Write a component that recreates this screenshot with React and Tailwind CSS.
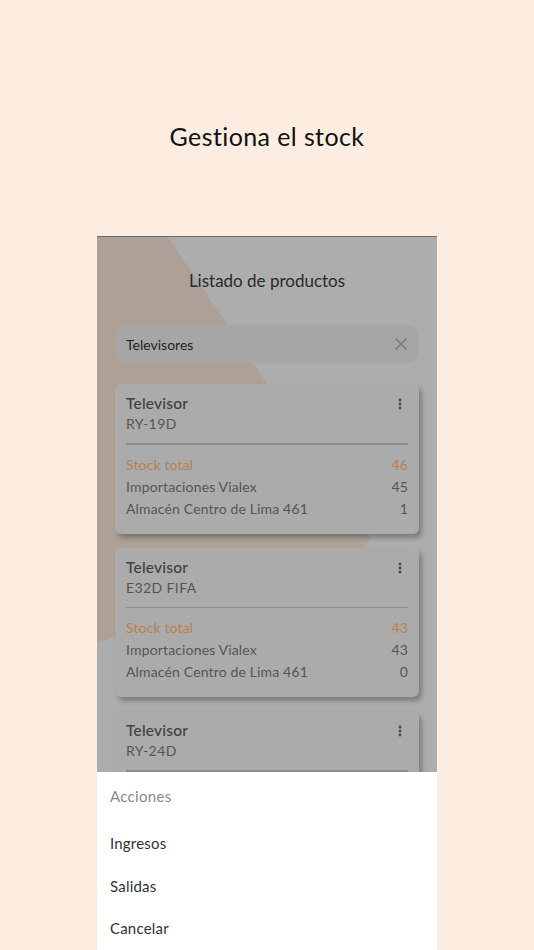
import React from 'react';

const products = [
  { name: 'Televisor', model: 'RY-19D', total: 46, stores: [['Importaciones Vialex', 45], ['Almacén Centro de Lima 461', 1]] },
  { name: 'Televisor', model: 'E32D FIFA', total: 43, stores: [['Importaciones Vialex', 43], ['Almacén Centro de Lima 461', 0]] },
  { name: 'Televisor', model: 'RY-24D', total: 12, stores: [['Importaciones Vialex', 12], ['Almacén Centro de Lima 461', 0]] },
];

const Dots = () => (
  <svg width="4" height="12" viewBox="0 0 4 12" className="mt-[2px]">
    <circle cx="2" cy="2" r="1.4" fill="#4a4a4a" />
    <circle cx="2" cy="6" r="1.4" fill="#4a4a4a" />
    <circle cx="2" cy="10" r="1.4" fill="#4a4a4a" />
  </svg>
);

const ProductCard = ({ product }) => (
  <div className="bg-[#ababab] rounded-md px-[11px] pt-2 pb-[14px] shadow-[3px_4px_5px_rgba(0,0,0,0.28)]">
    <div className="flex justify-between items-start">
      <div>
        <p className="text-[15.5px] leading-[22px] font-medium text-[#404040] tracking-[0.2px]">{product.name}</p>
        <p className="text-[14px] leading-5 text-[#555] tracking-[0.4px]">{product.model}</p>
      </div>
      <div className="pt-[4px] pr-[6px]">
        <Dots />
      </div>
    </div>
    <div className="h-[1.5px] bg-[#8c8c8c] mt-[9px] mb-[9px]" />
    <div className="text-[14px] leading-[22px] tracking-[0.15px]">
      <div className="flex justify-between text-[#b9804f]">
        <span>Stock total</span>
        <span>{product.total}</span>
      </div>
      {product.stores.map(([store, qty]) => (
        <div key={store} className="flex justify-between text-[#555]">
          <span>{store}</span>
          <span>{qty}</span>
        </div>
      ))}
    </div>
  </div>
);

export default function App() {
  return (
    <div className="min-h-[950px] bg-[#fdede0] flex flex-col items-center" style={{ fontFamily: 'Lato, "Noto Sans", sans-serif' }}>
      <h1 className="mt-[120px] text-[25px] leading-8 text-[#111] tracking-[0.4px]">Gestiona el stock</h1>

      {/* Phone screen */}
      <div className="mt-[84px] w-[340px] h-[714px] relative overflow-hidden bg-[#adadad] border-t border-[#6b6b6b]">
        <svg className="absolute inset-0" width="340" height="714" viewBox="0 0 340 714">
          <polygon points="0,0 71,0 274,301 265,311 0,406" fill="#ada197" />
        </svg>

        <div className="relative px-[18px]">
          <h2 className="pt-[32px] text-center text-[17px] leading-6 text-[#2a2a2a]">Listado de productos</h2>

          <div className="mt-[32px] h-[38px] bg-[#a6a6a6] rounded-xl flex items-center justify-between pl-[11px] pr-[12px]">
            <span className="text-[14px] text-[#1f1f1f]">Televisores</span>
            <svg width="12" height="12" viewBox="0 0 12 12">
              <path d="M1 1L11 11M11 1L1 11" stroke="#787878" strokeWidth="1.6" strokeLinecap="round" />
            </svg>
          </div>

          <div className="mt-[21px] flex flex-col gap-[14px]">
            {products.map((p, i) => (
              <ProductCard key={i} product={p} />
            ))}
          </div>
        </div>

        {/* Bottom sheet */}
        <div className="absolute left-0 right-0 bottom-0 h-[178px] bg-white px-[13px] flex flex-col">
          <div className="h-[50px] pt-[12px]">
            <span className="text-[15px] leading-6 text-[#8a8a8a] tracking-[0.3px]">Acciones</span>
          </div>
          {['Ingresos', 'Salidas', 'Cancelar'].map((a) => (
            <div key={a} className="h-[43px] flex items-center text-[15px] text-[#333] tracking-[0.2px]">
              {a}
            </div>
          ))}
        </div>
      </div>
    </div>
  );
}
